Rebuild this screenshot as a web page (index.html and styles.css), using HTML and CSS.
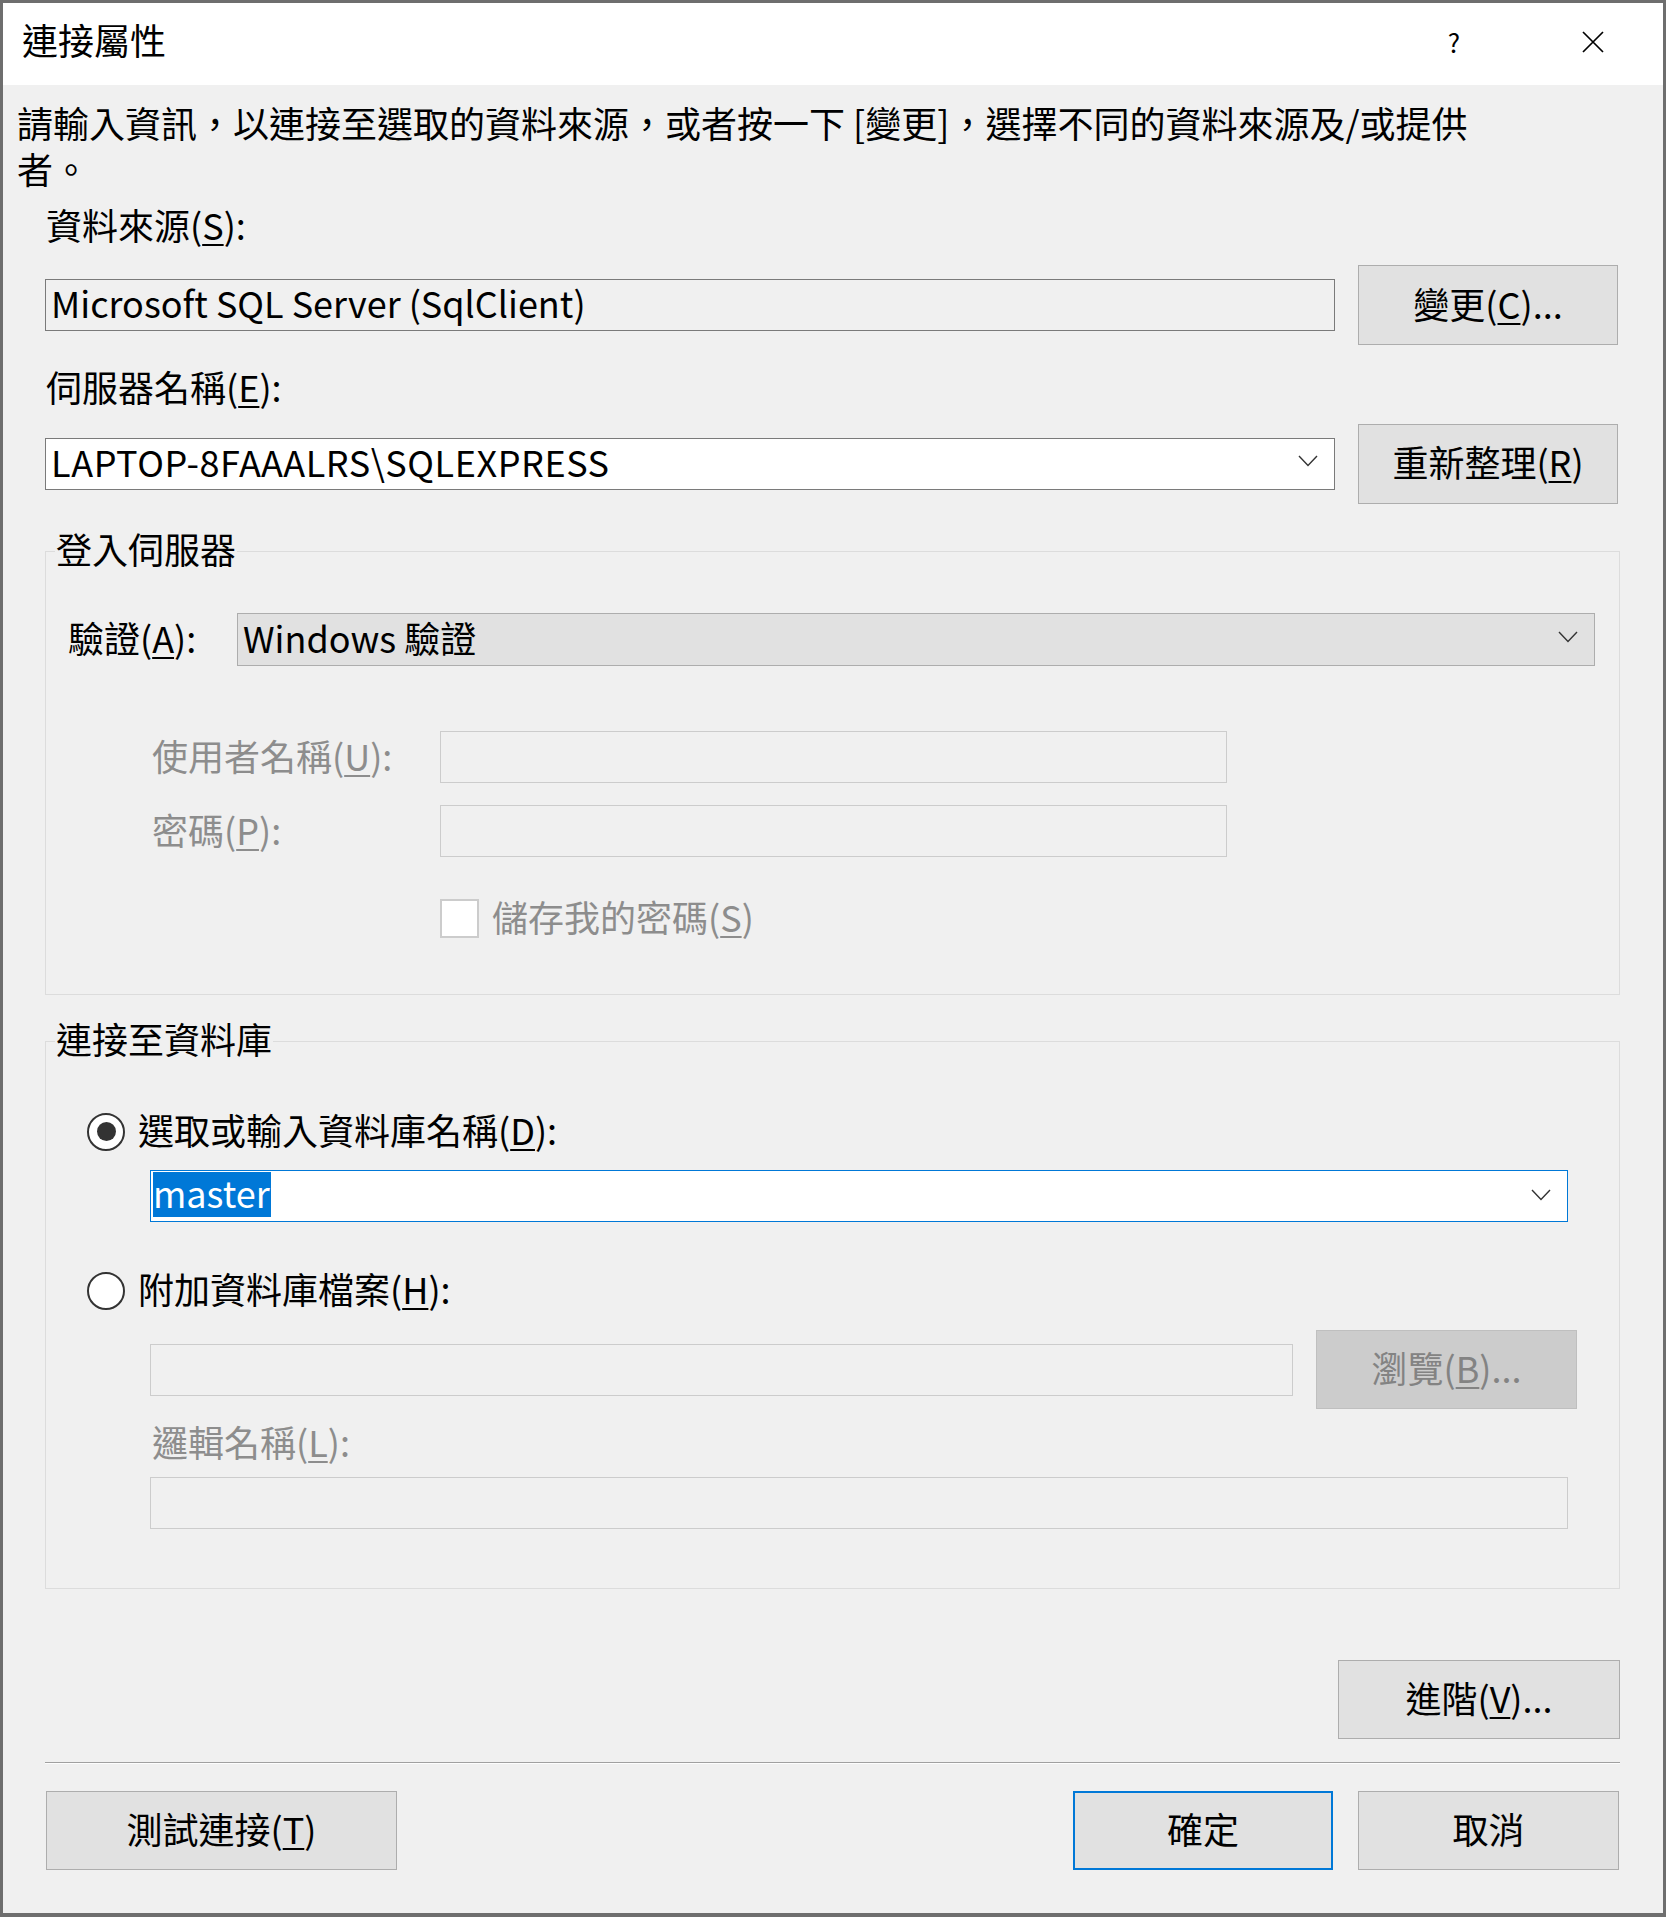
FILE: index.html
```html
<!DOCTYPE html>
<html lang="zh-Hant">
<head>
<meta charset="utf-8">
<title>連接屬性</title>
<link rel="stylesheet" href="styles.css">
</head>
<body>
<div class="window">
  <div class="titlebar">
    <span class="title">連接屬性</span>
    <span class="help">?</span>
    <span class="close"><svg width="22" height="22" viewBox="0 0 22 22"><path d="M1 1 L21 21 M21 1 L1 21" stroke="#000" stroke-width="1.7" fill="none"/></svg></span>
  </div>

  <p class="intro">請輸入資訊，以連接至選取的資料來源，或者按一下 [變更]，選擇不同的資料來源及/或提供者。</p>

  <div class="content">
    <div class="label lbl-first">資料來源(<u>S</u>):</div>
    <div class="row">
      <div class="textbox readonly">Microsoft SQL Server (SqlClient)</div>
      <button class="btn">變更(<u>C</u>)...</button>
    </div>

    <div class="label lbl-second">伺服器名稱(<u>E</u>):</div>
    <div class="row row-second">
      <div class="textbox combo"><span class="val wide">LAPTOP-8FAAALRS\SQLEXPRESS</span><svg class="chev" width="20" height="12" viewBox="0 0 20 12"><polyline points="1,1 10,10.5 19,1" fill="none" stroke="#333" stroke-width="1.4"/></svg></div>
      <button class="btn">重新整理(<u>R</u>)</button>
    </div>

    <fieldset class="group group-login">
      <legend>登入伺服器</legend>
      <div class="auth-row">
        <span class="auth-label">驗證(<u>A</u>):</span>
        <div class="textbox combo combo-ro"><span class="val">Windows 驗證</span><svg class="chev" width="20" height="12" viewBox="0 0 20 12"><polyline points="1,1 10,10.5 19,1" fill="none" stroke="#333" stroke-width="1.4"/></svg></div>
      </div>
      <div class="cred">
        <span class="dim-label">使用者名稱(<u>U</u>):</span>
        <div class="textbox disabled"></div>
        <span class="dim-label">密碼(<u>P</u>):</span>
        <div class="textbox disabled"></div>
        <div class="check-row">
          <span class="checkbox"></span>
          <span class="dim-label">儲存我的密碼(<u>S</u>)</span>
        </div>
      </div>
    </fieldset>

    <fieldset class="group group-db">
      <legend>連接至資料庫</legend>
      <div class="radio-row radio-first">
        <span class="radio checked"></span>
        <span class="radio-text">選取或輸入資料庫名稱(<u>D</u>):</span>
      </div>
      <div class="textbox combo focus db-combo"><span class="sel">master</span><svg class="chev" width="20" height="12" viewBox="0 0 20 12"><polyline points="1,1 10,10.5 19,1" fill="none" stroke="#333" stroke-width="1.4"/></svg></div>
      <div class="radio-row radio-second">
        <span class="radio"></span>
        <span class="radio-text">附加資料庫檔案(<u>H</u>):</span>
      </div>
      <div class="file-row">
        <div class="textbox disabled"></div>
        <button class="btn btn-disabled">瀏覽(<u>B</u>)...</button>
      </div>
      <div class="dim-label logical-label">邏輯名稱(<u>L</u>):</div>
      <div class="textbox disabled logical-input"></div>
    </fieldset>

    <button class="btn btn-advanced">進階(<u>V</u>)...</button>
    <div class="separator"></div>
    <div class="footer">
      <button class="btn btn-test">測試連接(<u>T</u>)</button>
      <span class="spacer"></span>
      <button class="btn btn-ok">確定</button>
      <button class="btn btn-cancel">取消</button>
    </div>
  </div>
</div>
</body>
</html>
```

FILE: styles.css
```css
* { box-sizing: border-box; }
html, body { margin: 0; padding: 0; }
body {
  background: #6f6f6f;
  font-family: "Noto Sans CJK TC", "Noto Sans", sans-serif;
  font-size: 36px;
  color: #000;
}
u { text-underline-offset: 4px; text-decoration-thickness: 1.5px; }

.window {
  width: 1666px;
  height: 1917px;
  border-style: solid;
  border-color: #6e6e6e;
  border-width: 3px 3px 4px 3px;
  background: #f0f0f0;
  display: flex;
  flex-direction: column;
}

.titlebar {
  flex: none;
  height: 82px;
  background: #fff;
  display: flex;
  align-items: center;
  padding-left: 19px;
}
.title { flex: 1; line-height: 40px; padding-bottom: 10px; }
.help {
  width: 138px;
  text-align: center;
  font-size: 26px;
  line-height: 30px;
  padding-bottom: 5px;
}
.close {
  width: 140px;
  display: flex;
  justify-content: center;
  align-items: center;
  padding-bottom: 5px;
}

.intro {
  margin: 0;
  padding: 14px 0 0 14px;
  width: 1499px;
  line-height: 46px;
}

.content {
  padding: 0 43px 0 42px;
  display: flex;
  flex-direction: column;
}

.label { line-height: 40px; padding-bottom: 5px; height: 45px; padding-left: 1px; }
.lbl-first { margin-top: 13px; }
.lbl-second { margin-top: 21px; }

.row {
  display: flex;
  align-items: center;
  gap: 23px;
  margin-top: 16px;
  margin-right: 2px;
  height: 80px;
}
.row-second { margin-top: 12px; height: 81px; }
.row .textbox { flex: 1; }

.textbox {
  height: 52px;
  border: 1px solid #7a7a7a;
  background: #fff;
  line-height: 45px;
  padding: 0 0 5px 5px;
  white-space: nowrap;
}
.textbox.readonly { background: #f0f0f0; }
.textbox.disabled { border-color: #cccccc; background: #f0f0f0; }
.combo { display: flex; align-items: center; }
.combo .val { flex: 1; }
.combo .chev { margin-right: 16px; flex: none; }
.combo-ro { background: #e1e1e1; border-color: #adadad; height: 53px; }
.focus { border-color: #0078d7; }
.wide { letter-spacing: 0.55px; }

.btn {
  font: inherit;
  color: #000;
  background: #e1e1e1;
  border: 1px solid #adadad;
  width: 260px;
  height: 80px;
  padding: 0 0 5px 0;
  line-height: 40px;
  flex: none;
}

.group {
  margin: 0;
  padding: 0;
  border: 1px solid #dcdcdc;
  min-width: 0;
}
.group legend {
  margin-left: 9px;
  padding: 0 1px 6px 1px;
  line-height: 39px;
}
.group-login { margin-top: 25px; padding-bottom: 56px; }
.group-db { margin-top: 24px; padding-bottom: 59px; }

.auth-row {
  display: flex;
  align-items: center;
  margin-top: 39px;
  padding-left: 22px;
  margin-right: 24px;
}
.auth-label { width: 169px; flex: none; line-height: 40px; padding-bottom: 6px; }
.auth-row .combo { flex: 1; }

.cred {
  display: grid;
  grid-template-columns: 288px 787px;
  row-gap: 22px;
  align-items: center;
  margin-top: 65px;
  margin-left: 106px;
}
.dim-label { color: #8d8d8d; line-height: 40px; padding-bottom: 5px; }
.check-row {
  grid-column: 2;
  display: flex;
  align-items: center;
  gap: 13px;
  margin-top: 20px;
  height: 39px;
}
.checkbox {
  width: 39px;
  height: 39px;
  border: 2px solid #cccccc;
  background: #fff;
  flex: none;
}

.radio-row {
  display: flex;
  align-items: center;
  gap: 13px;
  height: 45px;
  padding-left: 41px;
}
.radio-text { line-height: 40px; padding-bottom: 5px; }
.radio-first { margin-top: 45px; }
.radio-second { margin-top: 46px; }
.radio {
  width: 38px;
  height: 38px;
  border-radius: 50%;
  border: 2.5px solid #333;
  background: #fff;
  flex: none;
  display: flex;
  align-items: center;
  justify-content: center;
}
.radio.checked::after {
  content: "";
  width: 19px;
  height: 19px;
  border-radius: 50%;
  background: #333;
}

.db-combo {
  margin: 16px 51px 0 104px;
  padding: 0 0 3px 2px;
}
.sel {
  background: #0078d7;
  color: #fff;
  line-height: 40px;
  padding: 0 1px 5px 0;
  height: 45px;
  margin-right: auto;
}

.file-row {
  display: flex;
  align-items: center;
  gap: 23px;
  margin: 17px 42px 0 104px;
  height: 79px;
}
.file-row .textbox { flex: 1; }
.btn-disabled {
  background: #cccccc;
  border-color: #bfbfbf;
  color: #838383;
  width: 261px;
  height: 79px;
}

.logical-label { margin: 12px 0 0 106px; height: 45px; }
.logical-input { margin: 11px 51px 0 104px; }

.btn-advanced {
  align-self: flex-end;
  width: 282px;
  height: 79px;
  margin-top: 71px;
}
.separator {
  margin-top: 23px;
  border-top: 1px solid #a0a0a0;
  border-bottom: 1px solid #fdfdfd;
}
.footer {
  display: flex;
  align-items: center;
  margin-top: 27px;
  gap: 25px;
}
.spacer { flex: 1; }
.btn-test { width: 351px; height: 79px; margin-left: 1px; }
.btn-ok { height: 79px; border: 2px solid #0078d7; }
.btn-cancel { height: 79px; width: 261px; margin-right: 1px; }
```
